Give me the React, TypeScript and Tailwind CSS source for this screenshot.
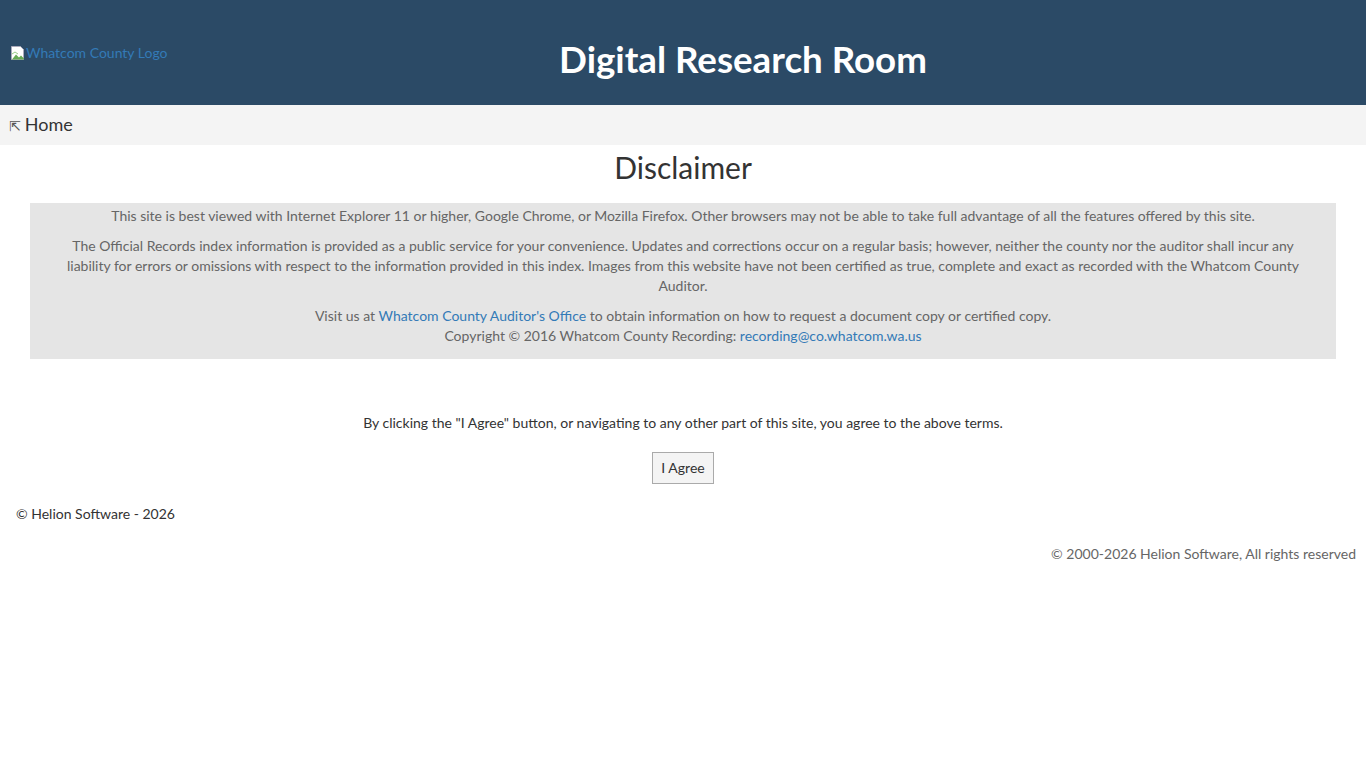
import React from "react";

function BrokenImg() {
  return (
    <svg width="16" height="16" viewBox="0 0 16 16" className="shrink-0">
      <path d="M1.5 1.5h9l3 3v10h-12z" fill="#fff" stroke="#aab" strokeWidth="1" />
      <path d="M2 14.5l4-5 3 3 2-2 3 3v1z" fill="#6a5" />
      <path d="M2 9l3-2 3 2" fill="none" stroke="#9c8" />
    </svg>
  );
}

export default function App() {
  const font = { fontFamily: 'Lato, "Noto Sans", sans-serif' };
  return (
    <div className="min-h-[768px] bg-white text-[#333] text-[14px] leading-[20px]" style={font}>
      <header className="h-[105px] bg-[#2b4a66] flex items-center">
        <div className="w-[240px] pl-[10px] flex items-center mt-[1px]">
          <BrokenImg />
          <span className="text-[#337ab7] text-[14px]">Whatcom County Logo</span>
        </div>
        <div className="flex-1 flex justify-center pr-[120px] pt-[13px]">
          <h1 className="text-white font-bold text-[36.7px] leading-[44px]">Digital Research Room</h1>
        </div>
      </header>
      <nav className="h-[40px] bg-[#f4f4f4] flex items-center pl-[9px]">
        <span className="text-[#333] text-[18px] leading-[24px]"><span className="text-[14px] mr-[4px] text-[#555]" style={{ fontFamily: '"DejaVu Sans", sans-serif' }}>⇱</span>Home</span>
      </nav>
      <h2 className="text-center text-[30px] leading-[36px] mt-[4px] text-[#333]">Disclaimer</h2>
      <div className="mx-[30px] mt-[18px] bg-[#e5e5e5] text-[#666] text-center px-[30px] pt-[3px] pb-[13px]">
        <p className="mb-[10px]">This site is best viewed with Internet Explorer 11 or higher, Google Chrome, or Mozilla Firefox. Other browsers may not be able to take full advantage of all the features offered by this site.</p>
        <p className="mb-[10px]">The Official Records index information is provided as a public service for your convenience. Updates and corrections occur on a regular basis; however, neither the county nor the auditor shall incur any liability for errors or omissions with respect to the information provided in this index. Images from this website have not been certified as true, complete and exact as recorded with the Whatcom County Auditor.</p>
        <p>
          Visit us at <a className="text-[#337ab7]">Whatcom County Auditor's Office</a> to obtain information on how to request a document copy or certified copy.
          <br />
          Copyright © 2016 Whatcom County Recording: <a className="text-[#337ab7]">recording@co.whatcom.wa.us</a>
        </p>
      </div>
      <p className="text-center mt-[54px]">By clicking the "I Agree" button, or navigating to any other part of this site, you agree to the above terms.</p>
      <div className="flex justify-center mt-[19px]">
        <button className="h-[32px] px-[8px] border border-[#aaa] bg-[#f4f4f4] text-[#333]">I Agree</button>
      </div>
      <p className="pl-[16px] mt-[20px]">© Helion Software - 2026</p>
      <p className="text-right pr-[10px] mt-[20px] text-[#666]">© 2000-2026 Helion Software, All rights reserved</p>
    </div>
  );
}
